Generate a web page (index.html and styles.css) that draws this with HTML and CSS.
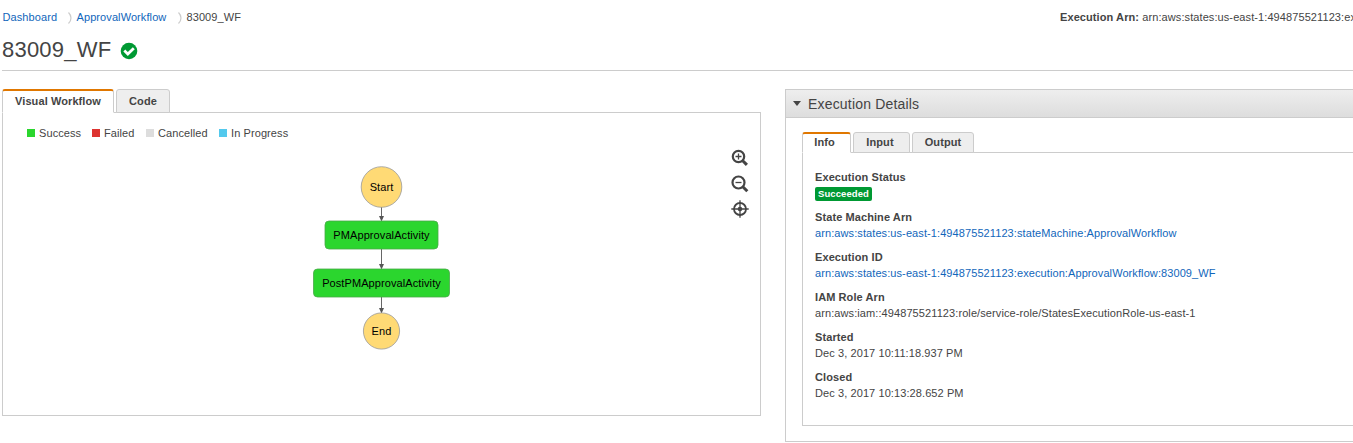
FILE: index.html
```html
<!DOCTYPE html>
<html lang="en">
<head>
<meta charset="utf-8">
<title>83009_WF</title>
<link rel="stylesheet" href="styles.css">
</head>
<body>
<header class="topbar">
  <nav class="crumbs">
    <a class="crumb-first" href="#">Dashboard</a>
    <svg class="sep" width="4" height="12" viewBox="0 0 4 12"><path d="M.5 .5Q3 3 3 6T.5 11.5"/></svg>
    <a class="crumb-second" href="#">ApprovalWorkflow</a>
    <svg class="sep" width="4" height="12" viewBox="0 0 4 12"><path d="M.5 .5Q3 3 3 6T.5 11.5"/></svg>
    <span class="crumb-last">83009_WF</span>
  </nav>
  <div class="exec-arn"><b>Execution Arn:</b> <span>arn:aws:states:us-east-1:494875521123:ex</span></div>
</header>
<div class="title">
  <h1>83009_WF</h1>
  <svg width="18" height="18" viewBox="0 0 18 18"><circle cx="9" cy="9" r="8.3" fill="#009933"/><path d="M4.3 8.6L7.800 12L13.8 6.2" fill="none" stroke="#fff" stroke-width="2.8"/></svg>
</div>
<main class="columns">
  <section class="workflow">
    <div class="tabs">
      <div class="tab active tab-visual"><span>Visual Workflow</span></div>
      <div class="tab tab-code"><span>Code</span></div>
    </div>
    <div class="canvas">
      <div class="legend">
        <span class="key success">Success</span>
        <span class="key failed">Failed</span>
        <span class="key cancelled">Cancelled</span>
        <span class="key progress">In Progress</span>
      </div>
      <svg class="graph" width="140" height="188" viewBox="311 163 140 188">
        <g class="edge">
          <path d="M381.5 207V217M381.5 249V265M381.5 297V309"/>
          <path class="head" d="M379 216h5l-2.500 5.500zM379 264h5l-2.500 5.500zM379 308h5l-2.500 5.500z"/>
        </g>
        <g class="terminal"><circle cx="381.500" cy="187" r="20.300"/><circle cx="381.500" cy="331" r="18.100"/></g>
        <g class="state"><rect x="325" y="221" width="113" height="28" rx="4"/><rect x="313.500" y="269" width="136" height="28" rx="4"/></g>
        <g class="label"><text x="381.500" y="191">Start</text><text x="381.500" y="239">PMApprovalActivity</text><text x="381.500" y="287">PostPMApprovalActivity</text><text x="381.500" y="335">End</text></g>
      </svg>
      <div class="tools">
        <svg width="18" height="18" viewBox="0 0 18 18"><circle cx="7.500" cy="7.500" r="5.700"/><path class="thin" d="M4.500 7.500h6M7.500 4.500v6"/><path class="handle" d="M11.700 11.700l4.200 4.200"/></svg>
        <svg width="18" height="18" viewBox="0 0 18 18"><circle cx="7.500" cy="7.500" r="6"/><path class="thin" d="M4.500 7.500h6"/><path class="handle" d="M11.800 11.800l4.500 4.500"/></svg>
        <svg width="18" height="18" viewBox="0 0 18 18"><circle class="ring" cx="9" cy="9" r="6"/><circle class="dot" cx="9" cy="9" r="2.300"/><path class="thin" d="M9 .3v17.400M.3 9h17.400"/></svg>
      </div>
    </div>
  </section>
  <section class="details">
    <div class="details-head"><i class="caret"></i><h2>Execution Details</h2></div>
    <div class="details-body">
      <div class="tabs small">
        <div class="tab active tab-info"><span>Info</span></div>
        <div class="tab tab-input"><span>Input</span></div>
        <div class="tab tab-output"><span>Output</span></div>
      </div>
      <dl class="facts">
        <dt>Execution Status</dt><dd class="status"><span class="badge">Succeeded</span></dd>
        <dt>State Machine Arn</dt><dd><a href="#">arn:aws:states:us-east-1:494875521123:stateMachine:ApprovalWorkflow</a></dd>
        <dt>Execution ID</dt><dd><a href="#">arn:aws:states:us-east-1:494875521123:execution:ApprovalWorkflow:83009_WF</a></dd>
        <dt>IAM Role Arn</dt><dd>arn:aws:iam::494875521123:role/service-role/StatesExecutionRole-us-east-1</dd>
        <dt>Started</dt><dd>Dec 3, 2017 10:11:18.937 PM</dd>
        <dt>Closed</dt><dd>Dec 3, 2017 10:13:28.652 PM</dd>
      </dl>
    </div>
  </section>
</main>
</body>
</html>
```
FILE: styles.css
```css
* { box-sizing: border-box; }
body { margin: 0; height: 443px; overflow: hidden; background: #fff; color: #444; font: 11px/16px "Liberation Sans", Arial, sans-serif; letter-spacing: .09px; }
a { color: #1166bb; text-decoration: none; }
svg { display: block; flex: none; }
.topbar { display: flex; justify-content: space-between; height: 34px; padding: 9px 0 0 2.500px; white-space: nowrap; }
.crumbs { display: flex; align-items: flex-start; }
.crumb-first { width: 65.500px; }
.crumb-second { width: 101px; }
.sep { margin: 3px 5px 0 0; fill: none; stroke: #ccc; stroke-width: 1.2; }
.sep + .crumb-second { margin-left: -.5px; }
.exec-arn { width: 293px; }
.title { display: flex; gap: 9px; height: 37px; margin-left: 2px; border-bottom: 1px solid #ccc; }
.title h1 { margin: 0; font-size: 22px; line-height: 31px; font-weight: 400; letter-spacing: .22px; }
.title svg { margin-top: 8px; }
.columns { display: flex; align-items: flex-start; gap: 24px; padding: 18px 0 0 2px; }
.workflow { flex: none; width: 759px; }
.tabs { display: flex; gap: 2px; height: 24px; margin-bottom: -1px; position: relative; }
.tab { border: 1px solid #ccc; border-radius: 3px 3px 0 0; background: #eee; font-weight: 700; text-align: center; line-height: 22px; white-space: nowrap; }
.tab.active { background: #fff; border-top: 2px solid #e47911; border-color: #e07700 #ccc #fff; line-height: 21px; }
.tab-visual { width: 112px; }
.tab-code { width: 54px; }
.canvas { display: grid; grid-template-columns: 311px 1fr 18px; grid-template-rows: 16px 1fr; height: 304px; padding: 12px 11px 0 0; border: 1px solid #ccc; }
.legend { grid-column: 1 / -1; display: flex; height: 16px; padding-left: 24px; }
.key { display: flex; align-items: center; gap: 4px; white-space: nowrap; }
.key::before { content: ""; width: 8px; height: 8px; background: #2bd62e; }
.success { width: 65px; }
.failed { width: 54px; }
.failed::before { background: #dd3330; }
.cancelled { width: 73px; }
.cancelled::before { background: #ddd; }
.progress::before { background: #53c9ed; }
.graph { grid-column: 1 / 3; margin: 22px 0 0 308px; }
.edge { fill: none; stroke: #666; stroke-width: 1; }
.head { fill: #555; stroke: none; }
.terminal { fill: #ffda75; stroke: #999; stroke-width: .8; }
.state { fill: #2bd62e; stroke: #4aa84a; stroke-width: .8; }
.label { fill: #000; font-size: 11px; text-anchor: middle; }
.tools { display: flex; flex-direction: column; gap: 7.500px; margin-top: 8px; fill: none; stroke: #444; stroke-width: 2.2; }
.thin { stroke-width: 1.3; }
.handle { stroke-width: 3; }
.ring { stroke-width: 1.8; }
.dot { fill: #444; stroke: none; }
.details { flex: none; width: 620px; height: 353px; border: 1px solid #ccc; }
.details-head { display: flex; align-items: center; height: 28px; padding-left: 7px; background: linear-gradient(#eee, #ddd); border-bottom: 1px solid #ccc; }
.caret { border: 4px solid transparent; border-top: 5px solid #444; border-bottom: 0; margin-right: 7px; }
.details-head h2 { margin: 0; font-size: 14px; font-weight: 400; letter-spacing: .18px; }
.details-body { padding: 14px 16px; }
.small { height: 21px; }
.small .tab { line-height: 19px; }
.small .active { line-height: 17px; }
.tab-info { width: 49px; padding-right: 4px; }
.tab-input { width: 57px; padding-right: 3px; }
.tab-output { width: 62px; }
.facts { height: 274px; margin: 0; padding: 16px 12px; border: 1px solid #ccc; }
.facts dt { font-weight: 700; }
.facts dd { margin: 0 0 8px; height: 16px; white-space: nowrap; }
.facts .status { padding-top: 2px; }
.badge { display: block; width: 57px; height: 14px; text-align: center; border-radius: 2px; background: #009933; color: #fff; font-weight: 700; font-size: 9.500px; line-height: 14px; }
```
